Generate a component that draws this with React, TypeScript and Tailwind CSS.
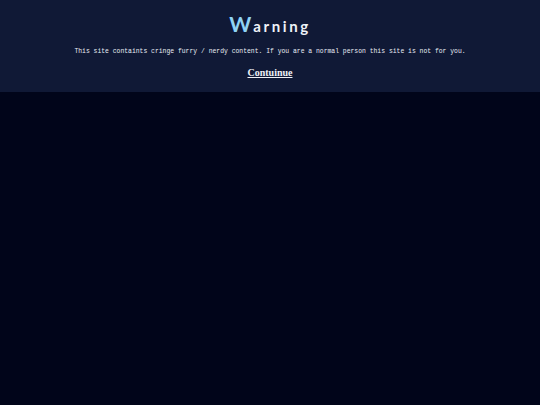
export default function App() {
  return (
    <div className="min-h-[405px] w-full bg-[#01051a]">
      <header className="flex h-[92px] flex-col items-center bg-[#101936] pt-[13px]">
        <h1 className="flex items-baseline font-['Lato','DejaVu_Sans',sans-serif] font-bold leading-none">
          <span className="text-[21px] text-[#8fd3f5]">W</span>
          <span className="ml-[2px] text-[15px] tracking-[2.6px] text-[#eef2f8]">arning</span>
        </h1>
        <p className="mt-[15px] font-['Liberation_Mono',monospace] text-[6.4px] leading-none text-[#e8ecf4]">
          This site containts cringe furry / nerdy content. If you are a normal person this site is not for you.
        </p>
        <a
          href="#"
          className="mt-[13px] font-['Liberation_Serif',serif] text-[10px] font-bold leading-none text-[#eef0f6] underline"
        >
          Contuinue
        </a>
      </header>
    </div>
  );
}
